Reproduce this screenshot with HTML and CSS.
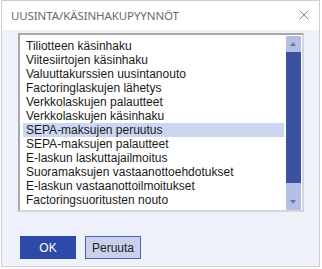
FILE: index.html
```html
<!DOCTYPE html>
<html lang="fi">
<head>
<meta charset="utf-8">
<link rel="stylesheet" href="styles.css">
</head>
<body>
<div class="dialog">
  <div class="titlebar">
    <span class="title">UUSINTA/KÄSINHAKUPYYNNÖT</span>
    <svg class="close" width="10" height="10" viewBox="0 0 10 10"><path d="M0.5 0.5L9.5 9.5M9.5 0.5L0.5 9.5" stroke="#8a8a8a" stroke-width="1" fill="none"/></svg>
  </div>
  <div class="content">
    <div class="listbox">
      <ul class="items">
        <li>Tiliotteen käsinhaku</li>
        <li>Viitesiirtojen käsinhaku</li>
        <li>Valuuttakurssien uusintanouto</li>
        <li>Factoringlaskujen lähetys</li>
        <li>Verkkolaskujen palautteet</li>
        <li>Verkkolaskujen käsinhaku</li>
        <li class="selected">SEPA-maksujen peruutus</li>
        <li>SEPA-maksujen palautteet</li>
        <li>E-laskun laskuttajailmoitus</li>
        <li>Suoramaksujen vastaanottoehdotukset</li>
        <li>E-laskun vastaanottoilmoitukset</li>
        <li>Factoringsuoritusten nouto</li>
      </ul>
      <div class="scrollbar">
        <div class="arrow up"></div>
        <div class="thumb"></div>
        <div class="track"></div>
        <div class="arrow down"></div>
      </div>
    </div>
    <div class="buttons">
      <button class="btn primary">OK</button>
      <button class="btn secondary">Peruuta</button>
    </div>
  </div>
</div>
</body>
</html>
```
FILE: styles.css
```css
html, body {
  margin: 0;
  padding: 0;
  background: #ffffff;
}
.dialog {
  margin-left: 1px;
  width: 319px;
  height: 267px;
  box-sizing: border-box;
  border: 1px solid #cfcfcf;
  display: flex;
  flex-direction: column;
  background: #eef1f9;
}
.titlebar {
  height: 29px;
  background: #ffffff;
  display: flex;
  align-items: center;
  justify-content: space-between;
  padding: 0 10px 0 9px;
  flex: none;
}
.title {
  font-family: "Noto Sans", sans-serif;
  font-size: 11.5px;
  color: #6b6b6b;
  letter-spacing: -0.1px;
}
.close {
  display: block;
  margin-top: -1px;
}
.content {
  flex: 1;
  padding: 3px 16px 0 16px;
  display: flex;
  flex-direction: column;
}
.listbox {
  width: 286px;
  height: 179px;
  box-sizing: border-box;
  border: 2px solid;
  border-color: #a9a9a9 #d6d6d6 #d6d6d6 #a9a9a9;
  background: #ffffff;
  display: flex;
}
.items {
  list-style: none;
  margin: 0;
  padding: 4px 2px 0 3px;
  flex: 1;
  font-family: "Liberation Sans", Arial, sans-serif;
  font-size: 12px;
  color: #1a1a1a;
}
.items li {
  height: 14px;
  line-height: 14px;
  padding-left: 3px;
  white-space: nowrap;
}
.items li.selected {
  background: #ccd6f0;
}
.scrollbar {
  width: 15px;
  display: flex;
  flex-direction: column;
  margin: 1px 1px 0 0;
  background: #b3bfe6;
}
.arrow {
  height: 16px;
  flex: none;
  position: relative;
}
.arrow.up::after, .arrow.down::after {
  content: "";
  position: absolute;
  left: 4px;
  top: 6px;
  border-left: 3.5px solid transparent;
  border-right: 3.5px solid transparent;
}
.arrow.up::after {
  border-bottom: 4px solid #6d7891;
}
.arrow.down::after {
  top: 6px;
  border-top: 4px solid #6d7891;
}
.thumb {
  height: 131px;
  background: #3a52a0;
  flex: none;
}
.track {
  flex: 1;
}
.buttons {
  display: flex;
  gap: 9px;
  margin-top: 24px;
  padding-left: 2px;
}
.btn {
  width: 56px;
  height: 23px;
  box-sizing: border-box;
  font-family: "Liberation Sans", Arial, sans-serif;
  font-size: 12px;
  padding: 0;
  margin: 0;
}
.btn.primary {
  background: #2e4aa8;
  border: 1px solid #2e4aa8;
  color: #ffffff;
}
.btn.secondary {
  background: #c8d0ec;
  border: 1px solid #4b65bb;
  color: #222222;
}
```
